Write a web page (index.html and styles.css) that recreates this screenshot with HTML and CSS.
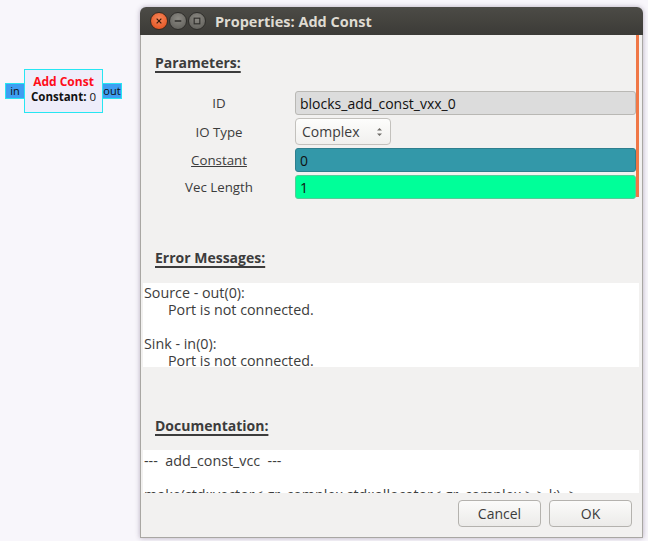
FILE: index.html
```html
<!DOCTYPE html>
<html>
<head>
<meta charset="utf-8">
<link rel="stylesheet" href="styles.css">
</head>
<body>
<div class="canvas">
  <div class="block">
    <div class="port port-in">in</div>
    <div class="block-body">
      <div class="block-title">Add Const</div>
      <div class="block-param"><b>Constant:</b> 0</div>
    </div>
    <div class="port port-out">out</div>
  </div>

  <div class="window">
    <div class="titlebar">
      <div class="wbtns">
        <span class="wbtn close"><svg width="17" height="17" viewBox="0 0 17 17"><path d="M6 6 L11 11 M11 6 L6 11" stroke="#3a1a0a" stroke-width="1.3"/></svg></span>
        <span class="wbtn"><svg width="17" height="17" viewBox="0 0 17 17"><path d="M5 8.5 H12" stroke="#2e2d2a" stroke-width="1.4"/></svg></span>
        <span class="wbtn"><svg width="17" height="17" viewBox="0 0 17 17"><rect x="5.5" y="5.5" width="6" height="6" fill="none" stroke="#2e2d2a" stroke-width="1.2"/></svg></span>
      </div>
      <div class="wtitle">Properties: Add Const</div>
    </div>
    <div class="wcontent">
      <div class="scroll">
        <div class="scrollbar"></div>
        <div class="section-head"><span>Parameters:</span></div>
        <div class="params">
          <div class="plabel">ID</div>
          <div class="field f-id">blocks_add_const_vxx_0</div>
          <div class="plabel">IO Type</div>
          <div class="combo-cell">
            <div class="combo">Complex
              <svg class="arrows" width="7" height="12" viewBox="0 0 7 12"><path d="M1 4.5 L3.5 2 L6 4.5Z M1 7.5 L3.5 10 L6 7.5Z" fill="#6f6d68"/></svg>
            </div>
          </div>
          <div class="plabel"><u>Constant</u></div>
          <div class="field f-const">0</div>
          <div class="plabel">Vec Length</div>
          <div class="field f-vec">1</div>
        </div>
        <div class="section-head errs"><span>Error Messages:</span></div>
        <div class="textbox errbox">
          <div>Source - out(0):</div>
          <div class="indent">Port is not connected.</div>
          <div class="blank"></div>
          <div>Sink - in(0):</div>
          <div class="indent">Port is not connected.</div>
        </div>
        <div class="section-head docs"><span>Documentation:</span></div>
        <div class="textbox docbox">
          <div>---&nbsp; add_const_vcc &nbsp;---</div>
          <div class="blank"></div>
          <div>make(std::vector&lt; gr_complex,std::allocator&lt; gr_complex &gt; &gt; k) -&gt;</div>
        </div>
      </div>
      <div class="actions">
        <button class="btn">Cancel</button>
        <button class="btn">OK</button>
      </div>
    </div>
  </div>
</div>
</body>
</html>
```

FILE: styles.css
```css
* { box-sizing: border-box; }
html, body { margin: 0; padding: 0; }
body {
  width: 648px;
  height: 541px;
  background: #f8f6fb;
  font-family: "Open Sans", "DejaVu Sans", sans-serif;
  overflow: hidden;
}
.canvas { position: relative; width: 648px; height: 541px; }

/* flowgraph block */
.block {
  position: absolute;
  left: 5px;
  top: 69px;
  display: flex;
  align-items: center;
}
.block-body {
  width: 79px;
  height: 44px;
  border: 1px solid #27e6f2;
  background: #eeedfa;
  text-align: center;
  padding-top: 4px;
  font-family: "Open Sans", sans-serif;
  font-size: 11px;
  line-height: 15px;
}
.block-title { color: #ff0d1a; font-weight: 700; font-size: 12px; }
.block-param { color: #111; font-size: 11.5px; }
.port {
  height: 16px;
  width: 19px;
  background: #3d9ef2;
  border: 1px solid #27e6f2;
  font-size: 11px;
  line-height: 14px;
  color: #111;
  text-align: center;
}
.port-in { border-right: none; }
.port-out { border-left: none; }

/* window */
.window {
  position: absolute;
  left: 140px;
  top: 7px;
  width: 503px;
  height: 531px;
  border-radius: 6px 6px 0 0;
  box-shadow: 0 0 5px rgba(60, 40, 80, 0.35);
  display: flex;
  flex-direction: column;
  overflow: hidden;
}
.titlebar {
  height: 28px;
  background: linear-gradient(#4c4b46, #3c3b37);
  display: flex;
  align-items: center;
  padding-left: 10px;
  flex: none;
}
.wbtns { display: flex; gap: 1px; }
.wbtn {
  width: 18px;
  height: 18px;
  border-radius: 50%;
  background: radial-gradient(circle at 50% 35%, #8c8a84, #5a5954);
  border: 1px solid #2f2e2b;
  display: flex;
  align-items: center;
  justify-content: center;
}
.wbtn svg { width: 16px; height: 16px; }
.wbtn.close { background: radial-gradient(circle at 50% 35%, #f7875a, #df4a17); border-color: #3a2a20; }
.wtitle {
  margin-left: 9px;
  color: #dfdbd2;
  font-weight: 700;
  font-size: 14.5px;
}
.wcontent {
  flex: 1;
  background: #f2f1f0;
  border: 1px solid #a9a7a3;
  border-top: none;
  display: flex;
  flex-direction: column;
  padding: 0 3px 0 2px;
}

.scroll {
  position: relative;
  height: 458px;
  overflow: hidden;
  font-size: 13px;
  color: #3c3c3c;
  flex: none;
}
.scrollbar {
  position: absolute;
  right: 0;
  top: 0;
  width: 3px;
  height: 162px;
  background: #f07746;
}
.section-head {
  padding: 18px 0 0 12px;
  height: 44px;
  font-weight: 700;
  font-size: 14px;
  color: #3c3c3c;
}
.section-head span {
  text-decoration: underline;
  text-underline-offset: 3px;
  text-decoration-thickness: 2px;
}
.params {
  display: grid;
  grid-template-columns: 152px 341px;
  row-gap: 3px;
  align-items: center;
  margin-top: 12px;
}
.plabel { text-align: center; color: #3c3c3c; font-size: 13.3px; }
.field {
  height: 24px;
  border-radius: 3px;
  border: 1px solid #b9b8b4;
  padding: 1px 4px 0;
  font-size: 14px;
  line-height: 21px;
  color: #111;
}
.f-id { background: #dcdcdc; }
.f-const { background: #3398a9; border-color: #2f7f8e; }
.f-vec { background: #00ff99; border-color: #55cc99; }
.combo-cell { display: flex; }
.combo {
  height: 27px;
  width: 96px;
  border-radius: 4px;
  border: 1px solid #c3c1bd;
  background: linear-gradient(#fdfdfc, #f1f0ee);
  display: flex;
  align-items: center;
  justify-content: space-between;
  padding: 0 7px 0 6px;
  font-size: 14px;
  color: #3c3c3c;
}
.section-head.errs { margin-top: 31px; height: 53px; }
.textbox {
  background: #ffffff;
  font-size: 14.3px;
  color: #3c3c3c;
  line-height: 17px;
  padding: 1px 0 0 1px;
  white-space: nowrap;
}
.errbox { height: 84px; }
.indent { padding-left: 24px; }
.blank { height: 17px; }
.section-head.docs { margin-top: 31px; height: 52px; }
.docbox { padding-top: 2px; }

.actions {
  flex: 1;
  display: flex;
  justify-content: flex-end;
  align-items: flex-start;
  gap: 8px;
  padding: 7px 7px 0 0;
}
.btn {
  width: 83px;
  height: 27px;
  border-radius: 4px;
  border: 1px solid #b4b2ae;
  background: linear-gradient(#fbfbfa, #ecebe9);
  font-family: "Open Sans", sans-serif;
  font-size: 14px;
  color: #3c3c3c;
  padding: 0;
}
```
